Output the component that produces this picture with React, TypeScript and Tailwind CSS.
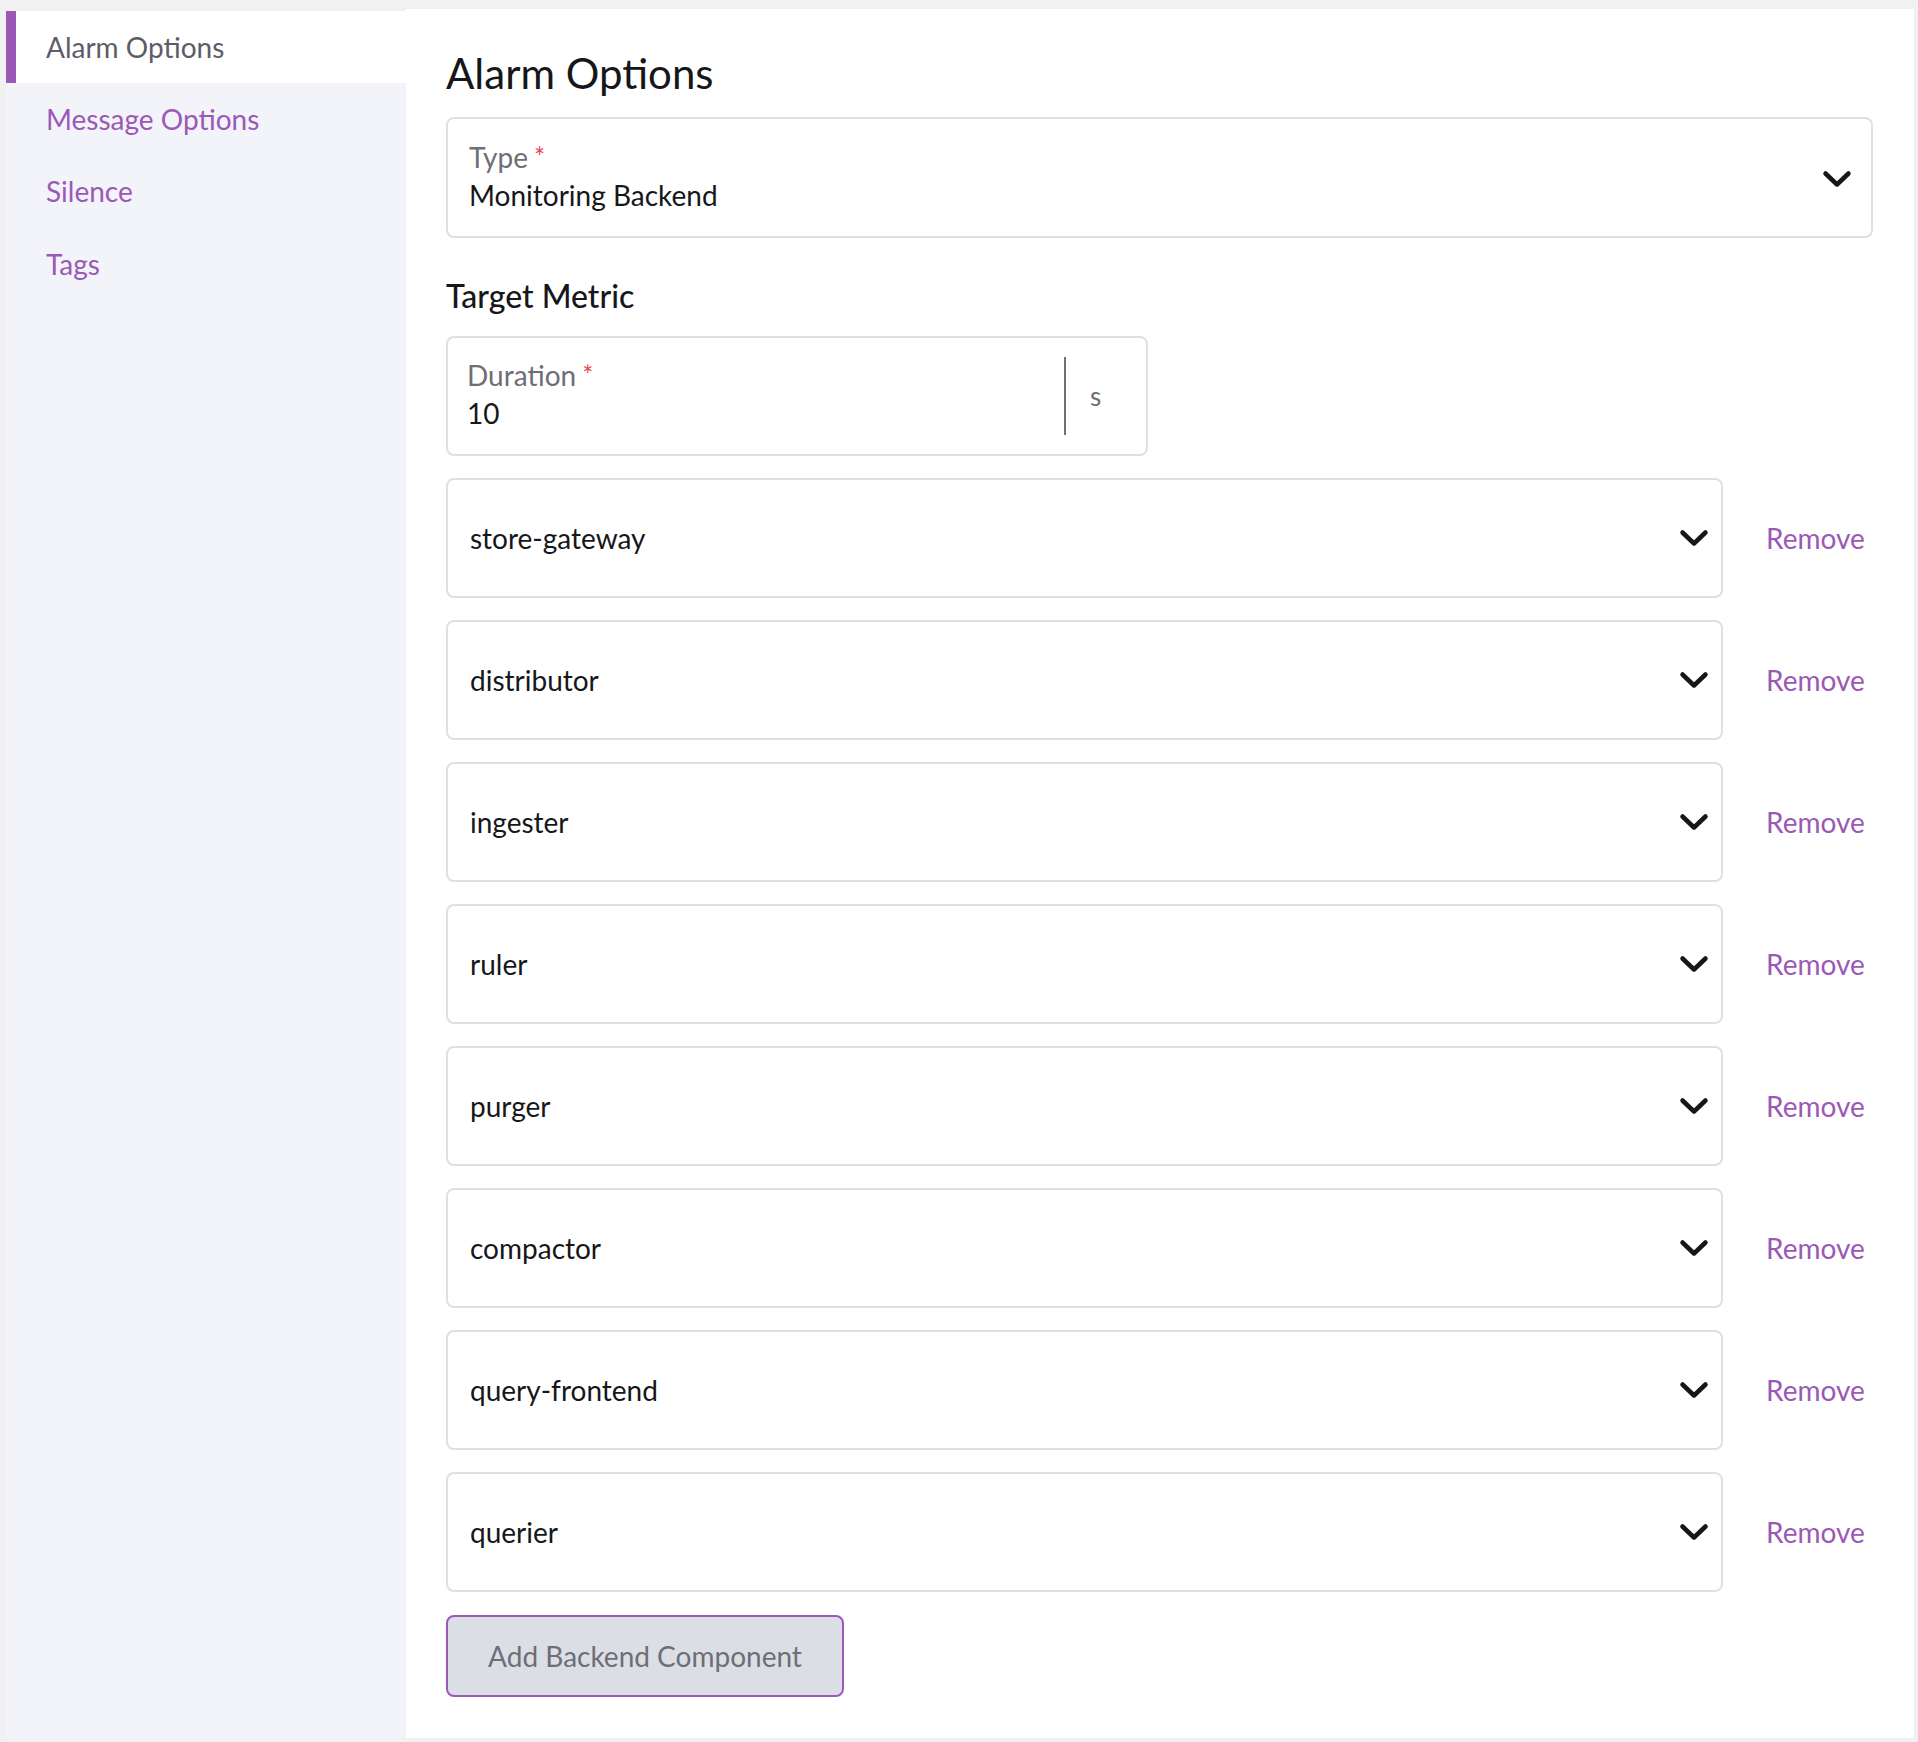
import React from "react";

const Chevron = ({ className = "" }: { className?: string }) => (
  <svg className={className} width="30" height="18" viewBox="0 0 30 18" fill="none">
    <polyline points="3.5,3.5 15,14.5 26.5,3.5" stroke="#16171a" strokeWidth="4.5" strokeLinecap="round" strokeLinejoin="round" />
  </svg>
);

const components = [
  "store-gateway",
  "distributor",
  "ingester",
  "ruler",
  "purger",
  "compactor",
  "query-frontend",
  "querier",
];

export default function App() {
  return (
    <div
      className="w-[1918px] h-[1742px] bg-[#f1f1f4] pt-[9px] pl-[6px] pr-[4px] pb-[4px] flex"
      style={{ fontFamily: "Lato, 'Open Sans', sans-serif" }}
    >
      <aside className="w-[400px] mt-[2px] bg-[#f3f4fa] flex flex-col">
        <div className="h-[72px] bg-white flex items-center border-l-[10px] border-[#9b59b6] pl-[30px] text-[28px] text-[#5c5d66]">
          Alarm Options
        </div>
        <div className="h-[72px] flex items-center pl-[40px] text-[28px] text-[#9b59b6]">Message Options</div>
        <div className="h-[72px] flex items-center pl-[40px] text-[28px] text-[#9b59b6]">Silence</div>
        <div className="h-[72px] flex items-center pl-[40px] pt-[2px] text-[28px] text-[#9b59b6]">Tags</div>
      </aside>
      <main className="flex-1 bg-white pl-[40px] pr-[41px] pt-[39px] pb-[41px] flex flex-col">
        <h1 className="text-[42px] leading-[50px] text-[#16171a]">Alarm Options</h1>
        <div className="mt-[19px] h-[121px] rounded-[8px] border-2 border-[#dfe0e6] flex items-center pl-[21px] pr-[19px]">
          <div className="flex-1 flex flex-col pb-[4px]">
            <div className="text-[28px] leading-[38px] text-[#6d6e76]">
              Type<span className="text-[#e5484d] text-[26px] align-top ml-[6px]">*</span>
            </div>
            <div className="text-[28px] leading-[38px] text-[#16171a]">Monitoring Backend</div>
          </div>
          <Chevron className="mt-[2px]" />
        </div>
        <h2 className="mt-[39px] text-[32px] leading-[38px] font-medium text-[#16171a]">Target Metric</h2>
        <div className="mt-[21px] w-[702px] h-[120px] rounded-[8px] border-2 border-[#dfe0e6] flex items-center pl-[19px]">
          <div className="flex-1 flex flex-col pb-[4px]">
            <div className="text-[28px] leading-[38px] text-[#6d6e76]">
              Duration<span className="text-[#e5484d] text-[26px] align-top ml-[6px]">*</span>
            </div>
            <div className="text-[28px] leading-[38px] text-[#16171a]">10</div>
          </div>
          <div className="w-[2px] h-[78px] bg-[#6d6e76]" />
          <div className="w-[80px] pl-[24px] text-[26px] text-[#6d6e76]">s</div>
        </div>
        <div className="mt-[22px] flex flex-col gap-[22px]">
          {components.map((c) => (
            <div key={c} className="flex items-center">
              <div className="flex-1 h-[120px] rounded-[8px] border-2 border-[#dfe0e6] flex items-center pl-[22px] pr-[12px]">
                <span className="flex-1 text-[28px] text-[#16171a]">{c}</span>
                <Chevron />
              </div>
              <div className="w-[150px] pl-[43px] text-[28px] text-[#9b59b6]">Remove</div>
            </div>
          ))}
        </div>
        <button className="mt-[23px] w-[398px] h-[82px] rounded-[8px] border-2 border-[#9b59b6] bg-[#dcdee6] text-[28px] text-[#6d6e76]">
          Add Backend Component
        </button>
      </main>
    </div>
  );
}
